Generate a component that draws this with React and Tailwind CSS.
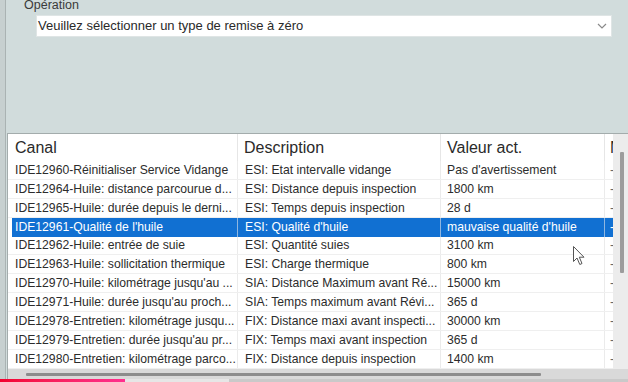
import React from "react";

const rows = [
  ["IDE12960-Réinitialiser Service Vidange", "ESI: Etat intervalle vidange", "Pas d'avertissement"],
  ["IDE12964-Huile: distance parcourue d...", "ESI: Distance depuis inspection", "1800 km"],
  ["IDE12965-Huile: durée depuis le derni...", "ESI: Temps depuis inspection", "28 d"],
  ["IDE12961-Qualité de l'huile", "ESI: Qualité d'huile", "mauvaise qualité d'huile", true],
  ["IDE12962-Huile: entrée de suie", "ESI: Quantité suies", "3100 km"],
  ["IDE12963-Huile: sollicitation thermique", "ESI: Charge thermique", "800 km"],
  ["IDE12970-Huile: kilométrage jusqu'au ...", "SIA: Distance Maximum avant Ré...", "15000 km"],
  ["IDE12971-Huile: durée jusqu'au proch...", "SIA: Temps maximum avant Révi...", "365 d"],
  ["IDE12978-Entretien: kilométrage jusqu...", "FIX: Distance maxi avant inspecti...", "30000 km"],
  ["IDE12979-Entretien: durée jusqu'au pr...", "FIX: Temps maxi avant inspection", "365 d"],
  ["IDE12980-Entretien: kilométrage parco...", "FIX: Distance depuis inspection", "1400 km"],
];

const Row = ({ canal, desc, value, selected }) => {
  if (selected) {
    return (
      <div className="flex h-[18.9px] text-[12.2px] text-white">
        <div className="w-[230px] shrink-0 pl-[4px] flex">
          <div className="flex-1 bg-[#1170d2] border-r border-[#8fb6e0] pl-[3px] flex items-center whitespace-nowrap overflow-hidden">
            {canal}
          </div>
        </div>
        <div className="w-[203px] shrink-0 bg-[#1170d2] border-r border-[#8fb6e0] pl-[7px] flex items-center whitespace-nowrap overflow-hidden">
          {desc}
        </div>
        <div className="w-[164px] shrink-0 bg-[#1170d2] border-r border-[#8fb6e0] pl-[6px] flex items-center whitespace-nowrap overflow-hidden">
          {value}
        </div>
        <div className="w-[8px] shrink-0 bg-[#1170d2] pl-[5px] flex items-center overflow-hidden">-</div>
      </div>
    );
  }
  return (
    <div className="flex h-[18.9px] text-[12.2px] text-[#2c2c2c] border-b border-[#efefef]">
      <div className="w-[230px] shrink-0 border-r border-[#ebebeb] pl-[7px] flex items-center whitespace-nowrap overflow-hidden">
        {canal}
      </div>
      <div className="w-[203px] shrink-0 border-r border-[#ebebeb] pl-[7px] flex items-center whitespace-nowrap overflow-hidden">
        {desc}
      </div>
      <div className="w-[164px] shrink-0 border-r border-[#ebebeb] pl-[6px] flex items-center whitespace-nowrap overflow-hidden">
        {value}
      </div>
      <div className="w-[8px] shrink-0 pl-[5px] flex items-center overflow-hidden text-[#666]">-</div>
    </div>
  );
};

const App = () => {
  return (
    <div className="relative flex w-[628px] h-[382px] overflow-hidden bg-[#d1dcdc] font-['Liberation_Sans',Arial,sans-serif]">
      <div className="w-[6px] shrink-0 bg-[#c7d0d0] border-r border-[#aab3b3]" />
      <div className="flex-1 flex flex-col">
        <div className="-mt-[2px] pl-[18px] h-[14px] leading-[14px] text-[12.5px] text-[#3a3a3a]">Opération</div>
        <div className="mt-[3px] ml-[30px] w-[576px] h-[22px] bg-white border border-[#dfe5e5] flex items-center justify-between pl-[1px] pr-[4px]">
          <span className="text-[13px] text-[#2a2a2a] whitespace-nowrap">Veuillez sélectionner un type de remise à zéro</span>
          <svg width="10" height="6" viewBox="0 0 10 6">
            <polyline points="1,1 5,5 9,1" fill="none" stroke="#8a8a8a" strokeWidth="1.2" />
          </svg>
        </div>

        <div className="mt-[96px] ml-[1px] flex-1 flex flex-col border-t border-l border-[#a3acac] bg-white">
          <div className="flex">
            <div className="w-[605px] shrink-0">
              <div className="flex h-[27px] text-[16px] text-[#2a2a2a]">
                <div className="w-[230px] shrink-0 border-r border-[#e6e6e6] pl-[7px] flex items-center">Canal</div>
                <div className="w-[203px] shrink-0 border-r border-[#e6e6e6] pl-[6px] flex items-center">Description</div>
                <div className="w-[164px] shrink-0 border-r border-[#e6e6e6] pl-[6px] flex items-center">Valeur act.</div>
                <div className="w-[8px] shrink-0 pl-[5px] flex items-center overflow-hidden whitespace-nowrap">Min.</div>
              </div>
              {rows.map((r, i) => (
                <Row key={i} canal={r[0]} desc={r[1]} value={r[2]} selected={r[3]} />
              ))}
            </div>
            <div className="flex-1 bg-[#ececec] pl-[7px] pt-[18px]">
              <div className="w-[4px] h-[121px] bg-[#9c9c9c] rounded-[1px]" />
            </div>
          </div>
          <div className="flex-1 bg-[#d9d9d9] pl-[18px] pt-[4px]">
            <div className="w-[515px] h-[3px] bg-[#8c8c8c] rounded-[1px]" />
          </div>
        </div>
      </div>

      <svg className="absolute left-[573px] top-[246px]" width="13" height="20" viewBox="0 0 13 20">
        <path d="M0.5 0.5 L0.5 15.5 L4 12 L6.8 18.5 L9 17.5 L6.3 11.2 L11 11.2 Z" fill="#ffffff" stroke="#555" strokeWidth="1" />
      </svg>

      <div className="absolute left-0 bottom-0 w-full h-[3px] flex bg-[#c9c9c9]">
        <div className="w-[125px] h-full bg-gradient-to-r from-[#f2002e] to-[#ff2f8e]" />
        <div className="w-[104px] h-full bg-[#e6e6e6]" />
      </div>
    </div>
  );
};

export default App;
